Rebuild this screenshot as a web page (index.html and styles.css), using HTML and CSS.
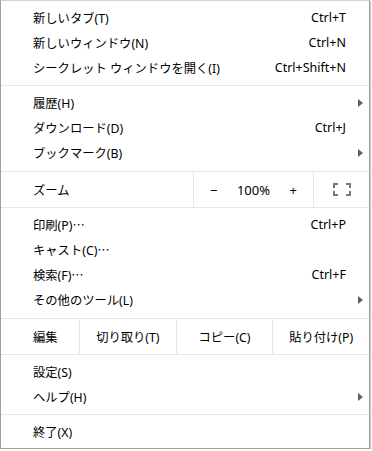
FILE: index.html
```html
<!DOCTYPE html>
<html lang="ja">
<head>
<meta charset="utf-8">
<link rel="stylesheet" href="styles.css">
</head>
<body>
<div class="menu">
  <div class="item"><span class="label">新しいタブ(T)</span><span class="key">Ctrl+T</span><span class="sub"></span></div>
  <div class="item"><span class="label">新しいウィンドウ(N)</span><span class="key">Ctrl+N</span><span class="sub"></span></div>
  <div class="item"><span class="label">シークレット ウィンドウを開く(I)</span><span class="key">Ctrl+Shift+N</span><span class="sub"></span></div>
  <div class="sep"></div>
  <div class="item"><span class="label">履歴(H)</span><span class="key"></span><span class="sub"><svg class="arrow" width="5" height="8" viewBox="0 0 5 8"><path d="M0 0L5 4L0 8Z"/></svg></span></div>
  <div class="item"><span class="label">ダウンロード(D)</span><span class="key">Ctrl+J</span><span class="sub"></span></div>
  <div class="item"><span class="label">ブックマーク(B)</span><span class="key"></span><span class="sub"><svg class="arrow" width="5" height="8" viewBox="0 0 5 8"><path d="M0 0L5 4L0 8Z"/></svg></span></div>
  <div class="band zoom">
    <span class="band-label">ズーム</span>
    <div class="zoom-ctrls">
      <span class="zbtn">−</span>
      <span class="zbtn">100%</span>
      <span class="zbtn">+</span>
    </div>
    <div class="fullscreen">
      <svg width="18" height="13" viewBox="0 0 18 13" fill="none" stroke="#7a7a7a" stroke-width="2">
        <path d="M1 5V1H5"/>
        <path d="M13 1H17V5"/>
        <path d="M17 8V12H13"/>
        <path d="M5 12H1V8"/>
      </svg>
    </div>
  </div>
  <div class="item"><span class="label">印刷(P)<span class="ell">…</span></span><span class="key">Ctrl+P</span><span class="sub"></span></div>
  <div class="item"><span class="label">キャスト(C)<span class="ell">…</span></span><span class="key"></span><span class="sub"></span></div>
  <div class="item"><span class="label">検索(F)<span class="ell">…</span></span><span class="key">Ctrl+F</span><span class="sub"></span></div>
  <div class="item"><span class="label">その他のツール(L)</span><span class="key"></span><span class="sub"><svg class="arrow" width="5" height="8" viewBox="0 0 5 8"><path d="M0 0L5 4L0 8Z"/></svg></span></div>
  <div class="band edit">
    <span class="edit-label">編集</span>
    <span class="ebtn">切り取り(T)</span>
    <span class="ebtn">コピー(C)</span>
    <span class="ebtn">貼り付け(P)</span>
  </div>
  <div class="item"><span class="label">設定(S)</span><span class="key"></span><span class="sub"></span></div>
  <div class="item"><span class="label">ヘルプ(H)</span><span class="key"></span><span class="sub"><svg class="arrow" width="5" height="8" viewBox="0 0 5 8"><path d="M0 0L5 4L0 8Z"/></svg></span></div>
  <div class="sep"></div>
  <div class="item"><span class="label">終了(X)</span><span class="key"></span><span class="sub"></span></div>
</div>
</body>
</html>
```
FILE: styles.css
```css
html, body {
  margin: 0;
  padding: 0;
  background: #ffffff;
}
body {
  font-family: "Noto Sans", "Noto Sans CJK JP", sans-serif;
  font-size: 12px;
  color: #000000;
}
.menu {
  width: 368px;
  height: 443px;
  border: 1px solid #a0a0a0;
  border-top-color: #d2d2d2;
  box-shadow: 1px 1px 0 #c8c8c8;
  padding: 4px 0 0 0;
  background: #ffffff;
  display: flex;
  flex-direction: column;
}
.item {
  height: 25px;
  display: flex;
  align-items: center;
  padding-left: 32px;
}
.label {
  flex: 1;
  white-space: nowrap;
  font-size: 12.3px;
}
.ell {
  font-family: "Noto Sans CJK JP", sans-serif;
}
.key {
  white-space: nowrap;
  font-size: 12.5px;
}
.sub {
  width: 23px;
  height: 25px;
  display: flex;
  align-items: center;
  justify-content: flex-start;
  padding-left: 12px;
  box-sizing: border-box;
}
.arrow {
  fill: #606060;
  display: block;
}
.sep {
  height: 1px;
  background: #e9e9e9;
  margin: 5px 0 4px;
}
.band {
  display: flex;
  align-items: stretch;
  border-top: 1px solid #e6e6e6;
  border-bottom: 1px solid #e6e6e6;
  margin: 6px 0 4px;
  height: 35px;
}
.band-label {
  flex: 1;
  display: flex;
  align-items: center;
  padding-left: 32px;
  font-size: 12.3px;
}
.zoom-ctrls {
  width: 119px;
  border-left: 1px solid #e6e6e6;
  display: flex;
}
.zbtn {
  flex: 1;
  display: flex;
  align-items: center;
  justify-content: center;
  font-size: 13px;
}
.fullscreen {
  width: 55px;
  border-left: 1px solid #e6e6e6;
  display: flex;
  align-items: center;
  justify-content: center;
}
.edit-label {
  width: 46px;
  padding-left: 32px;
  display: flex;
  align-items: center;
  font-size: 12.3px;
}
.ebtn {
  flex: 1;
  border-left: 1px solid #e6e6e6;
  display: flex;
  align-items: center;
  justify-content: center;
  white-space: nowrap;
  font-size: 12.3px;
}
```
